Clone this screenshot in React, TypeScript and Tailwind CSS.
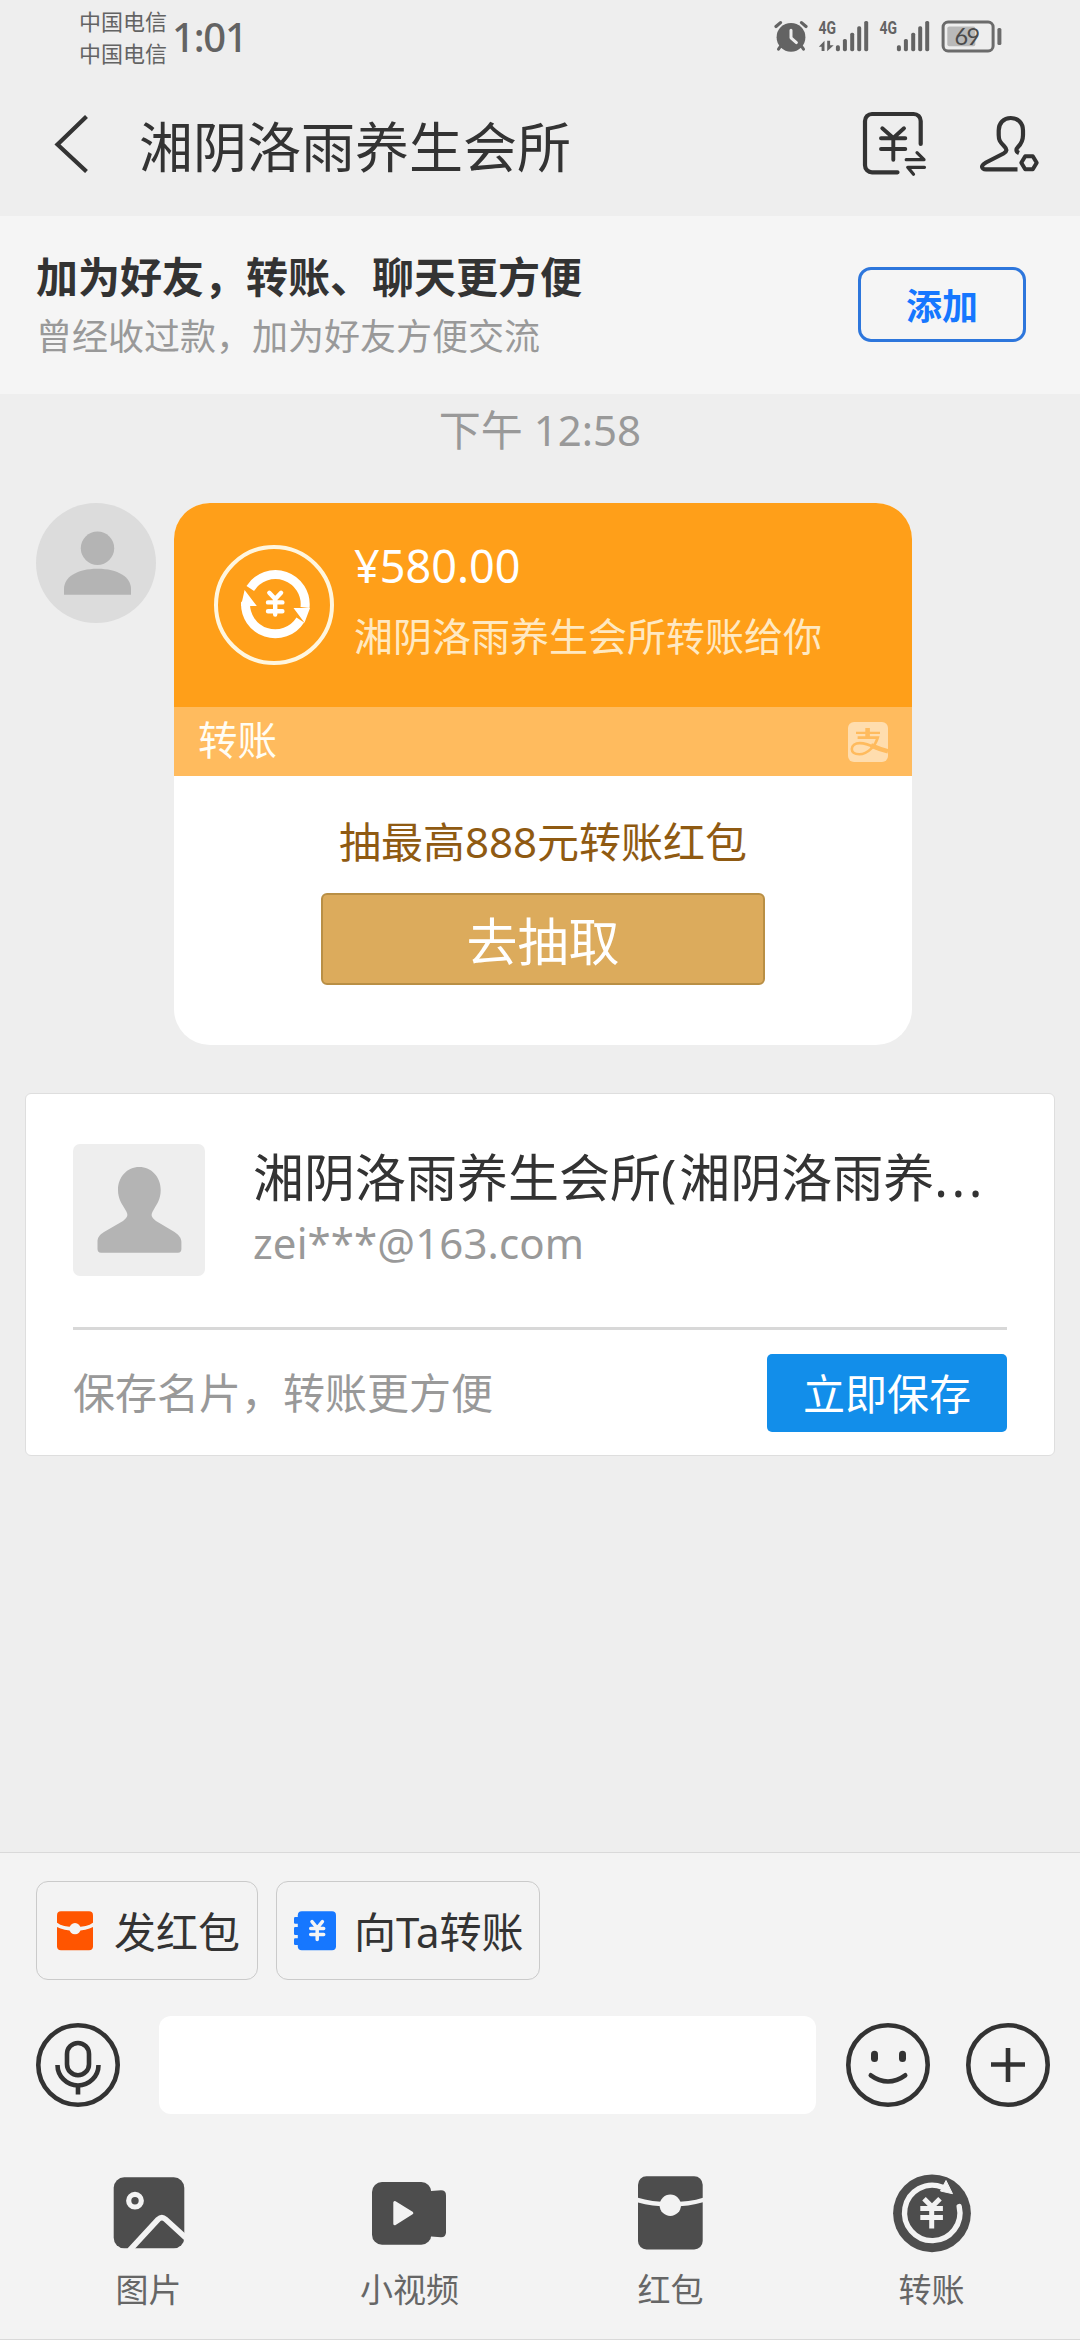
const quickActions = [
  { key: "redpacket", label: "发红包", icon: <RedPacketIcon />, box: "w-[222px] pl-5 gap-[21px]" },
  { key: "transfer", label: "向Ta转账", icon: <TransferBookIcon />, box: "w-[264px] pl-[17px] gap-[18px]" }
];

const tools = [
  { key: "image", label: "图片", icon: <PictureIcon /> },
  { key: "video", label: "小视频", icon: <VideoIcon /> },
  { key: "packet", label: "红包", icon: <PacketIcon /> },
  { key: "transfer", label: "转账", icon: <TransferIcon /> }
];

const signalBars = [
  { x: 17.9, y: 29.3 },
  { x: 24.9, y: 23 },
  { x: 32.2, y: 16.7 },
  { x: 39.2, y: 10.3 },
  { x: 46.2, y: 5 }
];

function AlarmIcon() {
  return (
    <svg width="34" height="32" viewBox="0 0 34 32" fill="none" stroke="#636363" strokeLinecap="round">
      <circle cx="17" cy="17.3" r="14.4" fill="#636363" stroke="none" />
      <path d="M2 6.5 6.5 2.6M27.5 2.6 32 6.5" strokeWidth="3.2" />
      <path d="M7 25.5 4.5 29.2M27 25.5 29.5 29.2" strokeWidth="3" />
      <path d="M17 10.2v7.6l5.4 4.8" stroke="#eee" strokeWidth="3" strokeLinejoin="round" />
    </svg>
  );
}

function SignalIcon({ arrows }: { arrows?: boolean }) {
  return (
    <svg width="51" height="36" viewBox="0 0 51 36" fill="#636363" className="-mt-1 overflow-visible">
      <text
        x="0.5"
        y="18.400"
        fontSize="18.5"
        fontWeight="700"
        textLength="17.5"
        lengthAdjust="spacingAndGlyphs"
        className="font-['Roboto',sans-serif]"
      >
        4G
      </text>
      {arrows ? <path d="M6.500 24.700V35H3.600v-4.200H.8zM9.200 24.700h2.900v4.500h3.600l-6.500 6.100z" /> : null}
      {signalBars.map((bar) => (
        <rect key={bar.x} x={bar.x} y={bar.y} width="4" height={35.2 - bar.y} rx="1.6" />
      ))}
    </svg>
  );
}

function BatteryIcon() {
  return (
    <svg width="61" height="33" viewBox="0 0 61 33">
      <rect x="2.1" y="2.1" width="50" height="28.8" rx="5" fill="none" stroke="#6b6b6b" strokeWidth="3" />
      <rect x="6.3" y="6.5" width="28" height="19.8" rx="2" fill="#b9b9b9" />
      <rect x="56.4" y="8" width="4" height="17" rx="1.5" fill="#6b6b6b" />
      <text x="13.6" y="25.4" fontSize="23.5" fill="#4b4b4b" textLength="25.5" className="font-['Lato',sans-serif]">
        69
      </text>
    </svg>
  );
}

function YenBoxIcon() {
  return (
    <svg width="66" height="67" viewBox="0 0 66 67" fill="none" stroke="#333" strokeLinecap="round" strokeLinejoin="round">
      <path
        d="M58.7 33V10a7 7 0 0 0-7-7H10a7 7 0 0 0-7 7v44.3a7 7 0 0 0 7 7h25.5"
        strokeWidth="4.2"
      />
      <path d="M20.3 17.3 31.3 27l10.7-9.7M19 27.3h24.3M19 38h24.3M31.3 27.3v21.5" strokeWidth="3.9" />
      <path d="M44.2 48.7h17.8l-7-7M62.5 56.3H45.7l5.8 7" strokeWidth="3.2" />
    </svg>
  );
}

function UserSettingIcon() {
  return (
    <svg width="61" height="58" viewBox="0 0 61 58" fill="none" stroke="#333" strokeWidth="4.2">
      <path d="M40 38c-3.5-1.5-3-4-1-6 4-4 5-7 5-12v-4.500C44 8 39 3 31.800 3S19.700 8 19.700 15.500V20c0 5 1.300 7 5.300 11 3.500 3.500 3 5.500-.5 7.500L7 47.500c-3.500 2-4.200 3-3.900 4.500.3 1.800 1.900 2.400 3.900 2.400h31.500" />
      <path d="m42.300 47.700 3.900-6.500h7.600l3.900 6.500-3.900 6.500h-7.600z" strokeLinejoin="round" strokeWidth="4" />
    </svg>
  );
}

function AlipayMark() {
  return (
    <svg width="40" height="40" viewBox="0 0 40 40" fill="none" stroke="#ffbb5e" className="mr-2">
      <rect width="40" height="40" rx="6" fill="#ffddae" stroke="none" />
      <path d="M19.600 6v9" strokeWidth="4.600" />
      <path d="M8 10.800h24" strokeWidth="2.200" />
      <path d="M9.600 15.600h20.200C27.500 23.500 20 32.300 11.300 32.300c-5.300 0-7.500-2.300-7.500-5.200 0-3.400 3.200-6 8-6 6.200 0 12 2.800 17 5.200" strokeWidth="2.600" />
      <path d="M23 23.300c5 2.200 10 4.300 17 6" strokeWidth="4.600" />
    </svg>
  );
}

function RoundAvatar() {
  return (
    <svg width="120" height="120" viewBox="0 0 120 120" className="shrink-0">
      <circle cx="60" cy="60" r="60" fill="#dcdcdc" />
      <circle cx="61.5" cy="45.2" r="16.7" fill="#b4b4b4" />
      <path d="M28 91.700V86c0-12 13-20.300 33.500-20.300S95 74 95 86v5.700z" fill="#b4b4b4" />
    </svg>
  );
}

function TransferCoin() {
  return (
    <svg width="120" height="120" viewBox="0 0 120 120" fill="none" className="shrink-0">
      <circle cx="60" cy="60" r="58" stroke="#fff6df" strokeWidth="4" />
      <g stroke="#fff" strokeWidth="9">
        <path d="M36.300 43.500A29.700 29.700 0 0 1 91 62.500" />
        <path d="M86.300 75A29.700 29.700 0 0 1 31.600 57" />
      </g>
      <path d="M79.500 63H96l-5.500 14.700zM42.800 61H27l3.600-16z" fill="#fff" />
      <path
        d="M55.300 47.800 61.200 54l5.900-6.200M54 57.400h14.400M54 66.200h14.400M61.200 54v15.600"
        stroke="#fff"
        strokeWidth="4.4"
        strokeLinecap="round"
      />
    </svg>
  );
}

function SquareAvatar() {
  return (
    <svg width="132" height="132" viewBox="0 0 132 132" className="shrink-0">
      <rect width="132" height="132" rx="7" fill="#eee" />
      <path
        d="M66.300 23C54 23 45 33 45 46c0 9 4 14 7.500 20 3 5 2.500 7-2.500 11L31 88c-5 3-6.500 6-6.500 10v7q0 3.700 3.500 3.700h77q3.400 0 3.400-3.700v-7c0-4-2.400-7-6.900-10L83 77c-5-4-5.500-6-2.500-11 3.500-6 7.200-11 7.200-20 0-13-9.200-23-21.400-23z"
        fill="#b4b4b4"
      />
    </svg>
  );
}

function RedPacketIcon() {
  return (
    <svg width="36" height="40" viewBox="0 0 36 40">
      <rect y="0.3" width="36" height="39" rx="4" fill="#ff5500" />
      <path d="M-1 13.200c8 6.300 30 6.300 38 0" fill="none" stroke="#f4f4f4" strokeWidth="3.6" />
      <circle cx="18" cy="17.700" r="5.600" fill="#f4f4f4" />
    </svg>
  );
}

function TransferBookIcon() {
  return (
    <svg width="42" height="40" viewBox="0 0 42 40" fill="#1677ff">
      <rect x="3.8" y="0.3" width="38.2" height="39" rx="4" />
      <rect y="6" width="8" height="6.700" rx="1.200" />
      <rect y="16" width="8" height="8" rx="1.200" />
      <rect y="27.300" width="8" height="6.700" rx="1.200" />
      <path
        d="m18 10.700 5.200 6.300 5.200-6.300M16.700 17.400h13M16.700 23.400h13M23.200 17v11.600"
        fill="none"
        stroke="#f4f4f4"
        strokeWidth="3.500"
        strokeLinecap="round"
      />
    </svg>
  );
}

function MicIcon() {
  return (
    <svg width="84" height="84" viewBox="0 0 84 84" fill="none" stroke="#333" strokeWidth="4.6">
      <circle cx="42" cy="42" r="39.700" />
      <rect x="31" y="20" width="22" height="32.200" rx="11" />
      <path d="M21.500 42a20.500 20.500 0 0 0 41 0M42 62v9.500" />
    </svg>
  );
}

function SmileIcon() {
  return (
    <svg width="84" height="84" viewBox="0 0 84 84" fill="none" stroke="#333" strokeWidth="4.600">
      <circle cx="42" cy="42" r="39.700" />
      <rect x="25" y="27.700" width="7" height="11.300" rx="3.500" fill="#333" stroke="none" />
      <rect x="53" y="27.700" width="7" height="11.300" rx="3.500" fill="#333" stroke="none" />
      <path d="M24.800 52.300q17.200 12.400 34.400 0" strokeLinecap="round" />
    </svg>
  );
}

function PlusIcon() {
  return (
    <svg width="84" height="84" viewBox="0 0 84 84" fill="none" stroke="#333" strokeWidth="4.600">
      <circle cx="42" cy="42" r="39.700" />
      <path d="M25 41.500h34M42 25v34" />
    </svg>
  );
}

function PictureIcon() {
  return (
    <svg width="72" height="72" viewBox="0 0 72 72">
      <rect x="0.700" y="0.300" width="70.600" height="71" rx="10.500" fill="#4d4d4d" />
      <circle cx="22" cy="23.700" r="6.300" fill="none" stroke="#f3f3f3" strokeWidth="5.200" />
      <path d="M16.500 73.500 45 42.500q3.800-3.700 7.500-.3L73.500 61.500" fill="none" stroke="#f3f3f3" strokeWidth="5.600" />
    </svg>
  );
}

function VideoIcon() {
  return (
    <svg width="76" height="63" viewBox="0 0 76 63" fill="#4d4d4d">
      <rect width="59.300" height="62.700" rx="10" />
      <path d="M56 9.300 69 8.300q5 0 5 5v37q0 5-5 5l-13-1z" />
      <path
        d="M22.800 20.500v21.300L39.800 31z"
        fill="#f3f3f3"
        stroke="#f3f3f3"
        strokeWidth="3"
        strokeLinejoin="round"
      />
    </svg>
  );
}

function PacketIcon() {
  return (
    <svg width="65" height="74" viewBox="0 0 65 74">
      <rect y="0.200" width="64.700" height="73.300" rx="8.500" fill="#4d4d4d" />
      <path d="M-1 23.800c18 6 48.700 6 66.700 0" fill="none" stroke="#f3f3f3" strokeWidth="4.400" />
      <circle cx="32.300" cy="29.300" r="10.700" fill="#f3f3f3" />
    </svg>
  );
}

function TransferIcon() {
  return (
    <svg width="78" height="79" viewBox="0 0 78 79" fill="none" stroke="#f3f3f3">
      <circle cx="39" cy="39.300" r="38.900" fill="#4d4d4d" stroke="none" />
      <path d="M66.200 32.600A27.700 27.700 0 1 1 49.500 13.200" strokeWidth="5.400" strokeLinecap="round" />
      <path d="m53 6.500 6.500 13.200-12-2.700z" fill="#f3f3f3" strokeWidth="1" />
      <path d="m31 24.800 8 8 8-8M27.300 34.600h22.600M27.300 43.400h22.600M38.700 32v22.500" strokeWidth="5" />
    </svg>
  );
}

function StatusBar() {
  return (
    <div className="flex h-[72px] items-start">
      <div className="ml-[79px] mt-[5px] w-[93px] text-[22px] leading-8 text-[#636363]">
        <p>中国电信</p>
        <p>中国电信</p>
      </div>
      <span className="mt-[17px] text-[40px] font-medium leading-10 tracking-[-1.2px] text-[#636363]">1:01</span>
      <div className="ml-auto mr-[78px] mt-5 flex items-start">
        <AlarmIcon />
        <div className="ml-2.5 flex gap-2.5">
          <SignalIcon arrows />
          <SignalIcon />
        </div>
        <div className="ml-[11px]">
          <BatteryIcon />
        </div>
      </div>
    </div>
  );
}

function TransferCard() {
  return (
    <div className="h-[542px] w-[738px] overflow-hidden rounded-[36px] bg-white">
      <div className="flex h-[204px] bg-[#ff9f19] pl-10 pt-[42px]">
        <TransferCoin />
        <div className="-mt-px ml-5 whitespace-nowrap">
          <p className="text-[45px] leading-[44px] text-white">¥580.00</p>
          <p className="mt-[27px] text-[39px] leading-[42px] text-[#ffe9c2]">湘阴洛雨养生会所转账给你</p>
        </div>
      </div>
      <div className="flex h-[69px] items-center justify-between bg-[#ffbb5e] pl-6 pr-4">
        <span className="mb-[3px] text-[39.5px] leading-[44px] text-[#fffdf4]">转账</span>
        <AlipayMark />
      </div>
      <div className="flex flex-col items-center pt-[45px]">
        <p className="text-[42px] leading-[42px] text-[#8f5a12]">抽最高888元转账红包</p>
        <button
          type="button"
          className="mt-[30px] flex h-[92px] w-[444px] items-center justify-center rounded-[6px] border-2 border-[#b98f45] bg-[#dcab5c] pt-1 text-[51px] leading-[84px] text-white"
        >
          去抽取
        </button>
      </div>
    </div>
  );
}

function ContactCard() {
  return (
    <div className="mx-[25px] mt-12 h-[363px] rounded-[6px] border border-[#dedede] bg-white px-[47px]">
      <div className="flex h-[233px] pt-[50px]">
        <SquareAvatar />
        <div className="ml-12 whitespace-nowrap">
          <p className="mt-[7px] text-[51px] leading-[52px] text-[#333]">
            湘阴洛雨养生会所<span className="tracking-[3px]">(</span>湘阴洛雨养<span className="tracking-[3.5px]">...</span>
          </p>
          <p className="mt-4 text-[42px] leading-[48px] tracking-[0.1px] text-[#999]">zei***@163.com</p>
        </div>
      </div>
      <div className="h-[3px] bg-[#d8d8d8]" />
      <div className="mt-6 flex h-[78px] items-center justify-between">
        <span className="text-[42px] leading-[78px] text-[#999]">保存名片，转账更方便</span>
        <button type="button" className="h-[78px] w-60 rounded-[5px] bg-[#128eea] text-[42px] leading-[80px] text-white">
          立即保存
        </button>
      </div>
    </div>
  );
}

export default function App() {
  return (
    <main
      lang="zh-CN"
      className="flex h-[2340px] w-[1080px] flex-col overflow-hidden bg-[#eee] font-['Noto_Sans','Noto_Sans_CJK_SC',sans-serif]"
    >
      <StatusBar />
      <header className="flex h-36 pl-[54px]">
        <svg width="36" height="58" viewBox="0 0 36 58" fill="none" stroke="#333" strokeWidth="4.200" className="mt-[43px]">
          <path d="M32.500 1.500 3.500 29.500l29 27" />
        </svg>
        <h1 className="ml-[49px] mt-[47px] text-[54px] leading-[56px] text-[#333]">湘阴洛雨养生会所</h1>
        <div className="ml-auto mr-10 mt-[39px] flex gap-[51px]">
          <YenBoxIcon />
          <div className="mt-1">
            <UserSettingIcon />
          </div>
        </div>
      </header>

      <section className="flex h-[178px] justify-between bg-[#f5f5f5] pl-9 pr-[54px]">
        <div className="pt-[37px]">
          <p className="text-[42px] font-bold leading-[48px] text-[#333]">加为好友，转账、聊天更方便</p>
          <p className="mt-[15px] text-[36px] leading-[42px] text-[#999]">曾经收过款，加为好友方便交流</p>
        </div>
        <button
          type="button"
          className="mt-[51px] flex h-[75px] w-[168px] items-center justify-center rounded-[13px] border-[3px] border-[#2d76dc] pt-1 text-[36px] font-bold leading-[60px] text-[#1677ff]"
        >
          添加
        </button>
      </section>

      <section className="flex-1 pt-[15px]">
        <p className="text-center text-[42px] leading-[42px] text-[#999]">下午 12:58</p>
        <div className="mt-[52px] flex gap-[18px] pl-9">
          <RoundAvatar />
          <TransferCard />
        </div>
        <ContactCard />
      </section>

      <footer className="h-[488px] border-b border-t border-[#d9d9d9] bg-[#f3f3f3]">
        <div className="flex gap-[18px] pl-9 pt-7">
          {quickActions.map((item) => (
            <button
              key={item.key}
              type="button"
              className={`flex h-[99px] items-center whitespace-nowrap rounded-xl border border-[#cacaca] text-[42px] leading-[48px] text-[#333] ${item.box}`}
            >
              {item.icon}
              <span className="mt-[3px]">{item.label}</span>
            </button>
          ))}
        </div>
        <div className="mt-9 flex items-center pl-9">
          <MicIcon />
          <div className="ml-[39px] h-[98px] w-[657px] rounded-xl bg-white" />
          <div className="ml-[30px] flex gap-9">
            <SmileIcon />
            <PlusIcon />
          </div>
        </div>
        <div className="mt-[58px] grid grid-cols-4 px-[18px]">
          {tools.map((tool) => (
            <div key={tool.key} className="flex flex-col items-center">
              <div className="flex h-[82px] items-center">{tool.icon}</div>
              <span className="mt-4 text-[33px] leading-[40px] text-[#666]">{tool.label}</span>
            </div>
          ))}
        </div>
      </footer>
    </main>
  );
}
